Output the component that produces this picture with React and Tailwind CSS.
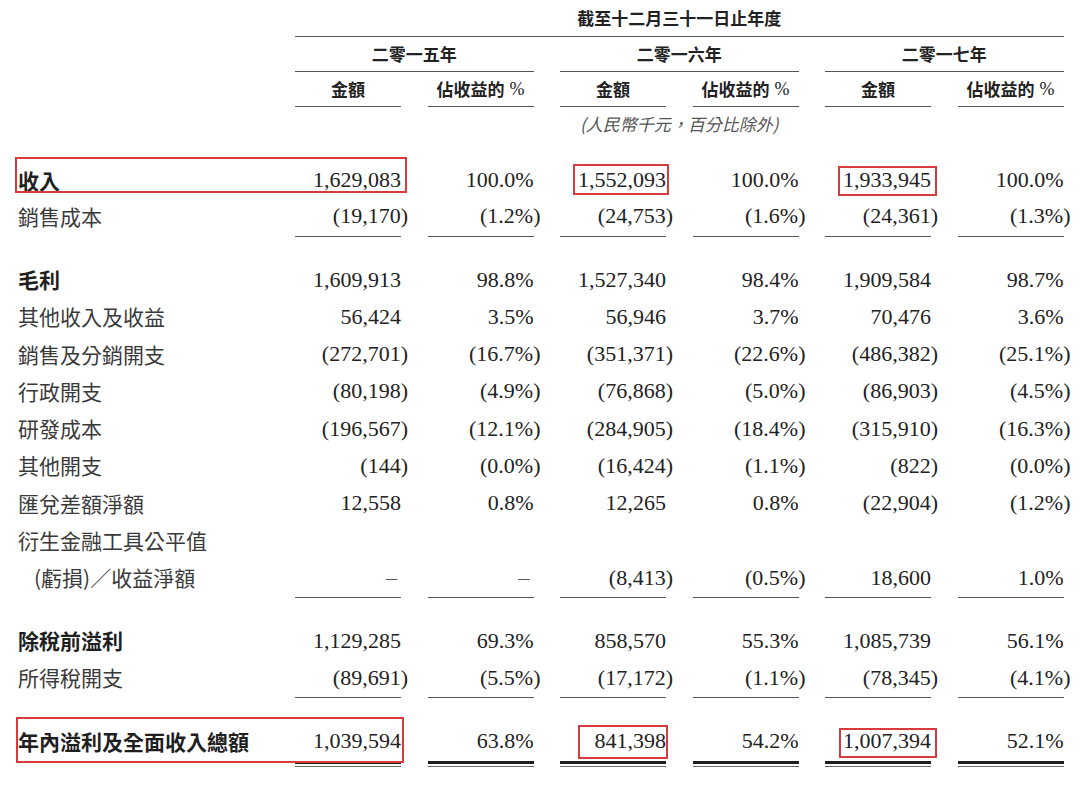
import React from "react";

const GRID = "grid grid-cols-[268.5px_repeat(6,106px)] gap-x-[26.5px]";
const CJK = "font-['Noto_Sans_CJK_TC','Noto_Sans',sans-serif]";
const NUM = "font-['Liberation_Serif','Times_New_Roman',serif]";

const upper = [
  { label: "收入", bold: true, values: ["1,629,083", "100.0%", "1,552,093", "100.0%", "1,933,945", "100.0%"] },
  { label: "銷售成本", values: ["(19,170)", "(1.2%)", "(24,753)", "(1.6%)", "(24,361)", "(1.3%)"] },
];

const middle = [
  { label: "毛利", bold: true, values: ["1,609,913", "98.8%", "1,527,340", "98.4%", "1,909,584", "98.7%"] },
  { label: "其他收入及收益", values: ["56,424", "3.5%", "56,946", "3.7%", "70,476", "3.6%"] },
  { label: "銷售及分銷開支", values: ["(272,701)", "(16.7%)", "(351,371)", "(22.6%)", "(486,382)", "(25.1%)"] },
  { label: "行政開支", values: ["(80,198)", "(4.9%)", "(76,868)", "(5.0%)", "(86,903)", "(4.5%)"] },
  { label: "研發成本", values: ["(196,567)", "(12.1%)", "(284,905)", "(18.4%)", "(315,910)", "(16.3%)"] },
  { label: "其他開支", values: ["(144)", "(0.0%)", "(16,424)", "(1.1%)", "(822)", "(0.0%)"] },
  { label: "匯兌差額淨額", values: ["12,558", "0.8%", "12,265", "0.8%", "(22,904)", "(1.2%)"] },
  { label: "衍生金融工具公平值", values: ["", "", "", "", "", ""] },
  { label: "(虧損)／收益淨額", indent: true, values: ["–", "–", "(8,413)", "(0.5%)", "18,600", "1.0%"] },
];

const lower = [
  { label: "除稅前溢利", bold: true, values: ["1,129,285", "69.3%", "858,570", "55.3%", "1,085,739", "56.1%"] },
  { label: "所得稅開支", values: ["(89,691)", "(5.5%)", "(17,172)", "(1.1%)", "(78,345)", "(4.1%)"] },
];

const total = { label: "年內溢利及全面收入總額", bold: true, values: ["1,039,594", "63.8%", "841,398", "54.2%", "1,007,394", "52.1%"] };

// red annotation boxes drawn over the table
const marks = [
  "left-[15px] top-[157px] w-[392px] h-[36px]",
  "left-[573px] top-[164px] w-[96px] h-[31px]",
  "left-[838px] top-[166px] w-[99px] h-[30px]",
  "left-[16px] top-[717px] w-[388px] h-[46px]",
  "left-[578px] top-[725px] w-[90px] h-[34px]",
  "left-[839px] top-[728px] w-[98px] h-[30px]",
];

function Cell({ value }) {
  const neg = value.startsWith("(");
  const dash = value === "–";
  return (
    <div className="flex items-center justify-end">
      <span className={neg ? "-mr-[7px]" : dash ? "mr-[4px] text-[#555]" : ""}>{value}</span>
    </div>
  );
}

function Row({ row, h = "h-[37.25px]" }) {
  return (
    <div className={`${GRID} ${h} ${NUM} text-[22px] leading-none text-[#222]`}>
      <div
        className={`flex items-center ${CJK} text-[21px] ${row.bold ? "font-bold text-[#1f1f1f]" : "text-[#3a3a3a]"} ${
          row.indent ? "pl-[34px]" : "pl-[18px]"
        }`}
      >
        {row.label}
      </div>
      {row.values.map((v, i) => (
        <Cell key={i} value={v} />
      ))}
    </div>
  );
}

function Rule({ className = "" }) {
  return (
    <div className={`${GRID} ${className}`}>
      <div />
      {[0, 1, 2, 3, 4, 5].map((i) => (
        <div key={i} className="h-px bg-[#555]" />
      ))}
    </div>
  );
}

function DoubleRule() {
  return (
    <div className={`${GRID} mt-[0.5px]`}>
      <div />
      {[0, 1, 2, 3, 4, 5].map((i) => (
        <div key={i} className="flex flex-col gap-[2px]">
          <div className="h-[3px] bg-[#1e1e1e]" />
          <div className="h-[1.5px] bg-[#666]" />
        </div>
      ))}
    </div>
  );
}

export default function App() {
  const years = ["二零一五年", "二零一六年", "二零一七年"];
  return (
    <div className="relative w-[1080px] h-[791px] bg-white overflow-hidden">
      {/* header */}
      <div className={`${GRID} h-[37px] ${CJK} text-[17px] font-bold text-[#222]`}>
        <div />
        <div className="col-span-6 flex items-center justify-center border-b border-[#555]">截至十二月三十一日止年度</div>
      </div>
      <div className={`${GRID} h-[35px] ${CJK} text-[17px] font-bold text-[#222]`}>
        <div />
        {years.map((y) => (
          <div key={y} className="col-span-2 flex items-center justify-center border-b border-[#555]">
            {y}
          </div>
        ))}
      </div>
      <div className={`${GRID} h-[35px] ${CJK} text-[17px] font-bold text-[#222]`}>
        <div />
        {years.map((y) => (
          <React.Fragment key={y}>
            <div className="flex items-center justify-center border-b border-[#555]">金額</div>
            <div className="flex items-center justify-center border-b border-[#555]">
              佔收益的<span className={`${NUM} ml-[5px] text-[18px] font-normal`}>%</span>
            </div>
          </React.Fragment>
        ))}
      </div>
      <div className={`${GRID} h-[33px] ${CJK} text-[17px] italic text-[#555]`}>
        <div />
        <div className="col-span-6 flex items-center justify-center">(人民幣千元，百分比除外)</div>
      </div>

      {/* body */}
      <div className="mt-[22px]">
        {upper.map((r) => (
          <Row key={r.label} row={r} h="h-[36px]" />
        ))}
      </div>
      <Rule className="mt-[1.5px]" />

      <div className="mt-[24.4px]">
        {middle.map((r) => (
          <Row key={r.label} row={r} />
        ))}
      </div>
      <Rule className="mt-[1px]" />

      <div className="mt-[23.8px]">
        {lower.map((r) => (
          <Row key={r.label} row={r} />
        ))}
      </div>
      <Rule className="mt-[1px]" />

      <div className="mt-[24.4px]">
        <Row row={total} />
      </div>
      <DoubleRule />

      {marks.map((m) => (
        <div key={m} className={`absolute ${m} border-2 border-[#d63c3e] pointer-events-none`} />
      ))}
    </div>
  );
}
